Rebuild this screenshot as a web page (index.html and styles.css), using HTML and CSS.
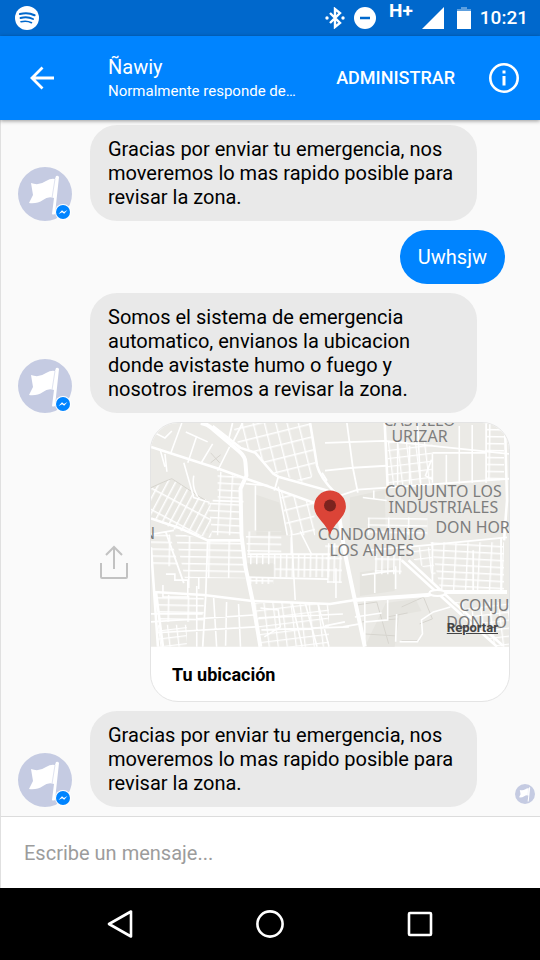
FILE: index.html
```
<!DOCTYPE html>
<html lang="es">
<head>
<meta charset="utf-8">
<meta name="viewport" content="width=device-width, initial-scale=1">
<title>Ñawiy</title>
<link rel="stylesheet" href="styles.css">
</head>
<body>
<svg class="defs" aria-hidden="true">
  <symbol id="flag" viewBox="0 0 54 54">
    <circle cx="27" cy="27" r="27" fill="#c5cbe2"/>
    <path fill="#fff" d="M13 16q8 3 15-2 5-3 9-2l1-3q2-1 3 1l-4 37q-2 1-3 0l2-16q-6-2-11 2-6 4-14 3l4-8z"/>
    <path d="M37 12l-3 19" stroke="#dfe3f0" fill="none"/>
  </symbol>
  <symbol id="messenger" viewBox="0 0 16 16">
    <circle cx="8" cy="8" r="8" fill="#fff"/>
    <circle cx="8" cy="8" r="7" fill="#0084ff"/>
    <path fill="#fff" d="M3.600 10 7 6.200l2 1.700 3.400-1.800L9.200 9.800 7.100 8.200z"/>
  </symbol>
</svg>
<div class="phone">
  <div class="status">
    <svg class="spotify" viewBox="0 0 24 24"><circle cx="12" cy="12" r="12" fill="#fff"/><g fill="none" stroke="#0068cc" stroke-linecap="round"><path d="M5 8q8-2 14.500 1.200" stroke-width="2.200"/><path d="M5.500 12q7-1.800 12.500 1" stroke-width="1.900"/><path d="M6 15.700q6-1.300 10.500 1" stroke-width="1.600"/></g></svg>
    <div class="status-icons">
      <svg width="20" height="22" viewBox="0 0 20 22"><path d="M5 6l10 10-5 4V2l5 4L5 16" fill="none" stroke="#fff" stroke-width="2.400"/><circle cx="2" cy="11" r="1.700" fill="#fff"/><circle cx="18" cy="11" r="1.700" fill="#fff"/></svg>
      <svg width="22" height="22" viewBox="0 0 22 22"><circle cx="11" cy="11" r="11" fill="#fff"/><path d="M6 11h10" stroke="#0068cc" stroke-width="2.500"/></svg>
      <span class="network">H+</span>
      <svg width="22" height="22" viewBox="0 0 22 22"><path d="M22 0v22H0z" fill="#fff"/></svg>
      <svg class="battery" width="14" height="22" viewBox="0 0 14 22"><path d="M4 0h6v2h4v3H0V2h4z" fill="#5c9fdf"/><path d="M0 4h14v18H0z" fill="#fff"/></svg>
      <time class="clock">10:21</time>
    </div>
  </div>

  <header class="bar">
    <button class="icon-btn" aria-label="Atrás"><svg width="24" height="24" viewBox="0 0 24 24"><path d="M24 12H2M12.500 1.500L2 12l10.500 10.500" fill="none" stroke="#fff" stroke-width="2.800"/></svg></button>
    <div class="who">
      <h1>Ñawiy</h1>
      <p>Normalmente responde de…</p>
    </div>
    <button class="manage">ADMINISTRAR</button>
    <button class="icon-btn" aria-label="Información"><svg width="30" height="30" viewBox="0 0 30 30"><circle cx="15" cy="15" r="13.700" fill="none" stroke="#fff" stroke-width="2.600"/><path d="M13.500 7.500h3v3h-3zM13.500 13h3v9.500h-3z" fill="#fff"/></svg></button>
  </header>

  <main class="chat">
    <div class="row">
      <div class="avatar"><svg class="face"><use href="#flag"/></svg><svg class="badge"><use href="#messenger"/></svg></div>
      <p class="bubble">Gracias por enviar tu emergencia, nos moveremos lo mas rapido posible para revisar la zona.</p>
    </div>
    <div class="row mine">
      <p class="bubble sent">Uwhsjw</p>
    </div>
    <div class="row">
      <div class="avatar"><svg class="face"><use href="#flag"/></svg><svg class="badge"><use href="#messenger"/></svg></div>
      <p class="bubble">Somos el sistema de emergencia automatico, envianos la ubicacion donde avistaste humo o fuego y nosotros iremos a revisar la zona.</p>
    </div>
    <div class="row location">
      <button class="icon-btn share" aria-label="Compartir"><svg width="28" height="34" viewBox="0 0 28 34"><path d="M1 18v14q0 1 1 1h24q1 0 1-1V18M14 24V2M6 10l8-8 8 8" fill="none" stroke="#c2c2c2" stroke-width="2"/></svg></button>
      <article class="card">
        <div class="map">
          <svg viewBox="0 0 360 225" role="img" aria-label="Mapa">
            <defs>
              <pattern id="gA" width="7" height="19" patternUnits="userSpaceOnUse" patternTransform="rotate(28)"><path d="M0 0V19M0 0H7" stroke="#fff" stroke-width="3"/></pattern>
              <pattern id="gB" width="12" height="7" patternUnits="userSpaceOnUse" patternTransform="rotate(3)"><path d="M0 0V7M0 0H12" stroke="#fff" stroke-width="2.800"/></pattern>
              <pattern id="gC" width="11" height="13" patternUnits="userSpaceOnUse" patternTransform="rotate(-14)"><path d="M0 0V13M0 0H11" stroke="#fff" stroke-width="2.800"/></pattern>
              <pattern id="gD" width="20" height="7" patternUnits="userSpaceOnUse" patternTransform="rotate(1)"><path d="M0 0V7M0 0H20" stroke="#fff" stroke-width="3"/></pattern>
              <pattern id="gE" width="6" height="12" patternUnits="userSpaceOnUse" patternTransform="rotate(1)"><path d="M0 0V12M0 0H6" stroke="#fff" stroke-width="3"/></pattern>
              <pattern id="gF" width="9" height="8" patternUnits="userSpaceOnUse" patternTransform="rotate(-7)"><path d="M0 0V8M0 0H9" stroke="#fff" stroke-width="2.600"/></pattern>
            </defs>
            <path fill="#ebeae6" d="M0 0h360v225H0z"/>
            <path fill="#e5e4df" d="M105 72l24 8 9 33h-32zM200 75l35-8 1 40-36-2zM97 141h26v15H97zM210 150l35-5v24l-35 5zM236 181l30-4 6 12-22 4-5 32h-30z"/>
            <path fill="#e8e7e2" d="M0 65l20-9 40 24-2 31L0 96z"/>
            <path fill="url(#gA)" d="M0 66l20-10 40 24 1 36-38-9L0 95z"/>
            <path fill="url(#gB)" d="M67 48l26 8-4 17 2 40H62l-5-32 10-4z"/>
            <path fill="url(#gC)" d="M82 0h78l6 46-8 15-34-11-18-20-18-7z"/>
            <path fill="url(#gC)" d="M130 69l34 12 1 32h-27z"/>
            <path fill="url(#gD)" d="M24 110l33 8h34l4 38H34zM5 172l48 3v25H8zM0 112h19l9 32H0z"/>
            <path fill="url(#gE)" d="M97 132h84v10H97zM124 142h56v13h-56zM98 155h25v7H98zM225 132h27v20h-27z"/>
            <path fill="url(#gD)" d="M95 109h36v22H97z"/>
            <path fill="url(#gE)" d="M175 121h17v40h-15z"/>
            <path fill="url(#gF)" d="M104 181h75v44h-68zM7 203h29v22H7zM238 18h45v44h-45zM255 125h26l6 30-22-17zM302 180h58v45h-12z"/>
            <path fill="url(#gB)" d="M281 120h74v48h-64z"/>
            <path fill="url(#gD)" d="M337 0h18v58h-18zM218 95h60v18h-60z"/>
            <g fill="none" stroke="#d7d5cf" stroke-width="1">
              <path d="M60 30l9 10M60 40l10-8M0 65q15-7 21-9l37 24M207 183l20-3 12 42M212 200l36-3M212 212l33 2M238 181v14l20-4M252 185l22-10 9 22-13 5M252 219h18"/>
            </g>
            <g fill="none" stroke="#fff" stroke-width="1.600">
              <path d="M31 0L20 30M0 8l14 7 7-7M46 13l-9 27M35 9l22 10M9 26l5 18M14 31l2 18M62 21l-12 20M79 24L67 48M33 40l10 35 16 5M43 53q-2 12 4 21M95 61l23 2M105 63v45M128 64l9 49M46 164v61M63 176l3 49M76 180l-1 44M88 182l2 43M0 200l103-7M6 211l99-6M12 163v12h25v-17H24v-6h-9M38 166v-12M48 155v12M141 108l4 70M141 115v18M150 109l12 24M142 181l10 44M155 181l12 44M168 182l11 43M108 196l85-4M111 208l88-3M110 186l18 2 2 17-16 10M212 153l35-5M225 151v20M246 144v23M215 178v44M238 178v20l-23 2M250 220h18l5-8-1-14 12-8 17-5M247 192l-1 28M205 195l27-4M193 205l17-3M186 146v30M175 204l20-4M268 0l3 60M283 31v29M297 32v29M310 3v58M323 2v58M248 21v41M260 23v38M283 30h54M213 75l24 3M224 68v8M282 37l-6 16 7 4"/>
            </g>
            <g fill="none" stroke="#fff" stroke-width="1.800">
              <path d="M197 0l6 45 5 25M175 20l60-2 125 13M175 48l28-3 34-2M190 73l18-6 29-2 124-9M337 0v60M15 110l18 51M0 112l23-4M62 78l31 1M128 54l-4 14M97 132h83M57 118l-2 56-3 51M218 128l57-5 83-8M283 120v40l10 10M352 115v53M324 128v42M97 155l81 2M205 178l15-2M0 192h52"/>
              <path d="M82 0l-4 17M92 0L80 24M177 58l-5-8"/>
            </g>
            <g fill="none" stroke="#fff" stroke-width="2.600" stroke-linejoin="round">
              <path d="M0 24l68 22 25 9 37 13 44 16M0 96l27 9 30 13h34M62 3l28 22 15 5 18 21 5 3 50 14M160 0l7 43q3 12 18 27M235 0l3 64M356 3l2 75-3 40M3 170l50 3 49 6 78 3 25-4M252 138l46 42 50 45M259 138l45 42 50 44M0 125l7 100M5 170l7 55"/>
            </g>
            <g fill="none" stroke="#fff" stroke-width="4" stroke-linejoin="round">
              <path d="M50 0q7 1 12 6l26 22q7 6 7 12l1 13-6 13 1 47 4 32 7 33 8 47M187 80l8 51 10 47 10 47M205 178l73-5 10-3h70"/>
            </g>
            <ellipse cx="288" cy="171" rx="8" ry="3" fill="#ebeae6" stroke="#fff" stroke-width="2"/>
            <g class="places">
              <text x="270" y="3" text-anchor="middle">CASTILLO</text>
              <text x="270" y="19" text-anchor="middle">URIZAR</text>
              <text x="294" y="74" text-anchor="middle">CONJUNTO LOS</text>
              <text x="294" y="91" text-anchor="middle">INDUSTRIALES</text>
              <text x="286" y="111">DON HOR</text>
              <text x="222" y="118" text-anchor="middle">CONDOMINIO</text>
              <text x="222" y="134" text-anchor="middle">LOS ANDES</text>
              <text x="310" y="189">CONJU</text>
              <text x="297" y="206">DON LO</text>
              <text x="4" y="117" text-anchor="end">N</text>
            </g>
            <path fill="#db4437" d="M180 113c-3-12-16-18-16-29a16 16 0 0 1 32 0c0 11-13 17-16 29z"/>
            <circle cx="180" cy="83" r="6" fill="#7b231e"/>
          </svg>
          <a class="report" href="#reportar">Reportar</a>
        </div>
        <h2>Tu ubicación</h2>
      </article>
    </div>
    <div class="row">
      <div class="avatar"><svg class="face"><use href="#flag"/></svg><svg class="badge"><use href="#messenger"/></svg></div>
      <p class="bubble">Gracias por enviar tu emergencia, nos moveremos lo mas rapido posible para revisar la zona.</p>
      <svg class="seen" role="img" aria-label="Visto"><use href="#flag"/></svg>
    </div>
  </main>

  <form class="composer">
    <input type="text" aria-label="Mensaje" placeholder="Escribe un mensaje...">
  </form>

  <nav class="nav">
    <button class="icon-btn" aria-label="Atrás"><svg width="28" height="28" viewBox="0 0 28 28"><path d="M25 1.500v25L3 14z" fill="none" stroke="#fff" stroke-width="2.600" stroke-linejoin="round"/></svg></button>
    <button class="icon-btn" aria-label="Inicio"><svg width="28" height="28" viewBox="0 0 28 28"><circle cx="14" cy="14" r="12.600" fill="none" stroke="#fff" stroke-width="2.600"/></svg></button>
    <button class="icon-btn" aria-label="Recientes"><svg width="28" height="28" viewBox="0 0 28 28"><rect x="3" y="3" width="22" height="22" rx="1" fill="none" stroke="#fff" stroke-width="2.600"/></svg></button>
  </nav>
</div>
</body>
</html>
```
FILE: styles.css
```
* { box-sizing: border-box; }
body {
  margin: 0;
  font-family: Roboto, "Liberation Sans", sans-serif;
  color: #000;
  background: #fafafa;
}
h1, h2, p { margin: 0; font-weight: 400; }
svg { display: block; }
.defs { position: absolute; width: 0; height: 0; }
button, input { font: inherit; border: 0; background: none; padding: 0; }
.phone { min-height: 100vh; display: flex; flex-direction: column; }

.status {
  height: 36px;
  padding: 0 12px 0 15px;
  display: flex;
  align-items: center;
  justify-content: space-between;
  background: #0068cc;
  color: #fff;
}
.spotify { width: 24px; height: 24px; }
.status-icons { display: flex; align-items: center; gap: 9px; }
.network { font-size: 19px; line-height: 20px; font-weight: 700; align-self: flex-start; margin: -6px 0 0 4px; }
.battery { margin-left: 4px; }
.clock { font-size: 19px; line-height: 22px; font-weight: 500; }

.bar {
  height: 84px;
  padding: 0 21px 0 30px;
  display: flex;
  align-items: center;
  background: #0084ff;
  color: #fff;
  box-shadow: 0 1px 4px rgba(0, 0, 0, .4);
  z-index: 1;
}
.icon-btn { display: flex; flex: none; align-items: center; justify-content: center; }
.who { flex: 1; min-width: 0; padding-left: 54px; }
.who h1 { font-size: 20px; line-height: 26px; }
.who p { font-size: 15px; line-height: 22px; white-space: nowrap; }
.manage { color: #fff; font-size: 18px; line-height: 24px; font-weight: 500; margin-right: 34px; }

.chat {
  flex: 1;
  display: flex;
  flex-direction: column;
  gap: 9px;
  padding: 5px 5px 9px 17px;
  background: #fafafa;
  border-left: 1px solid #e0e0e0;
}
.row { display: flex; align-items: flex-end; }
.avatar { position: relative; flex: none; width: 54px; height: 54px; margin-right: 18px; }
.face { width: 54px; height: 54px; }
.badge { position: absolute; right: 1px; bottom: 1px; width: 16px; height: 16px; }
.bubble {
  max-width: 387px;
  padding: 12px 18px;
  border-radius: 27px;
  background: #e9e9e9;
  font-size: 20px;
  line-height: 24px;
}
.mine { justify-content: flex-end; padding-right: 30px; }
.sent { background: #0084ff; color: #fff; padding: 15px 18px; }
.seen { width: 20px; height: 20px; margin-left: auto; margin-bottom: 3px; }

.location { align-items: center; justify-content: flex-end; padding-right: 25px; gap: 22px; }
.card {
  width: 360px;
  background: #fff;
  border: 1px solid #e4e4e4;
  border-radius: 28px;
  overflow: hidden;
}
.map { position: relative; }
.map svg { width: 100%; height: auto; }
.places { font-family: "Noto Sans", sans-serif; font-size: 16px; fill: #7d7d7d; }
.report { position: absolute; right: 11px; bottom: 11px; font-size: 13px; line-height: 16px; font-weight: 700; color: #444; }
.card h2 { padding: 16px 21px 14px; font-size: 18px; line-height: 24px; font-weight: 700; }

.composer { border-top: 1px solid #dcdcdc; border-left: 1px solid #e0e0e0; background: #fff; }
.composer input { display: block; width: 100%; height: 71px; padding: 0 23px; font-size: 20px; outline: 0; }
.composer input::placeholder { color: #9c9c9c; opacity: 1; }

.nav { height: 72px; display: flex; justify-content: center; align-items: center; gap: 122px; background: #000; }
```
